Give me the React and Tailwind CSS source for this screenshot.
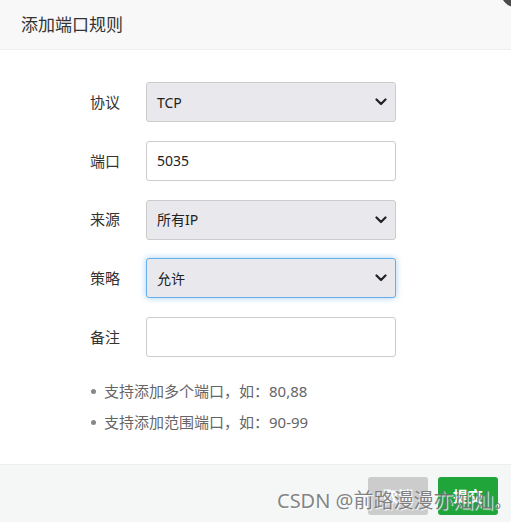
import React from 'react';

const font = { fontFamily: '"Microsoft YaHei", "Noto Sans", "Noto Sans CJK SC", sans-serif' };

function Chevron() {
  return (
    <svg width="12" height="8" viewBox="0 0 12 8" className="shrink-0">
      <path d="M1.5 1.5 L6 6 L10.5 1.5" fill="none" stroke="#222" strokeWidth="2.2" strokeLinecap="round" strokeLinejoin="round" />
    </svg>
  );
}

function Row({ label, children }) {
  return (
    <div className="flex items-center h-10">
      <div className="w-14 text-[15px] text-[#333]">{label}</div>
      {children}
    </div>
  );
}

function Select({ value, focused }) {
  return (
    <div
      className={
        focused
          ? 'w-[250px] h-10 flex items-center justify-between pl-[10px] pr-[8px] bg-[#e9e9ed] border border-[#66afe9] rounded-[3px] shadow-[0_0_6px_rgba(102,175,233,0.6)] text-[14px] text-[#222]'
          : 'w-[250px] h-10 flex items-center justify-between pl-[10px] pr-[8px] bg-[#e9e9ed] border border-[#cccccc] rounded-[3px] text-[14px] text-[#222]'
      }
    >
      <span>{value}</span>
      <Chevron />
    </div>
  );
}

function Input({ value }) {
  return (
    <div className="w-[250px] h-10 flex items-center px-[10px] bg-white border border-[#cccccc] rounded-[3px] text-[14px] text-[#222]">
      {value}
    </div>
  );
}

export default function App() {
  return (
    <div className="w-[511px] h-[522px] bg-white flex flex-col overflow-hidden relative" style={font}>
      <div className="h-[50px] shrink-0 bg-[#f8f8f8] border-b border-[#eeeeee] flex items-center pl-[21px] text-[17px] text-[#333]">
        添加端口规则
      </div>
      <div className="absolute -top-[28px] -right-[25px] w-[36px] h-[36px] rounded-full bg-[#4b4b4b]" />

      <div className="flex-1 pl-[90px] pt-[32px] flex flex-col">
        <div className="flex flex-col gap-[18.75px]">
          <Row label="协议"><Select value="TCP" /></Row>
          <Row label="端口"><Input value="5035" /></Row>
          <Row label="来源"><Select value="所有IP" /></Row>
          <Row label="策略"><Select value="允许" focused /></Row>
          <Row label="备注"><Input value="" /></Row>
        </div>
        <ul className="mt-[24px] flex flex-col gap-[10px] text-[15px] text-[#666]">
          <li className="flex items-center h-[21px]">
            <span className="w-[5px] h-[5px] rounded-full bg-[#888] ml-[1px] mr-[8px]" />
            支持添加多个端口，如：80,88
          </li>
          <li className="flex items-center h-[21px]">
            <span className="w-[5px] h-[5px] rounded-full bg-[#888] ml-[1px] mr-[8px]" />
            支持添加范围端口，如：90-99
          </li>
        </ul>
      </div>

      <div className="h-[58px] shrink-0 bg-[#f5f6f6] border-t border-[#eeeeee] flex items-start justify-end gap-[10px] pt-[12px] pr-[13px]">
        <button className="w-[60px] h-[38px] rounded-[3px] bg-[#cccccc] text-white text-[15px] font-bold">取消</button>
        <button className="w-[60px] h-[38px] rounded-[3px] bg-[#20a53a] text-white text-[15px] font-bold">提交</button>
      </div>

      <div className="absolute left-[277px] top-[489px] text-[20px] leading-[24px] text-[rgba(110,110,110,0.85)] [text-shadow:1px_1px_1px_rgba(255,255,255,0.9)] whitespace-nowrap">
        CSDN @前路漫漫亦灿灿。
      </div>
    </div>
  );
}
